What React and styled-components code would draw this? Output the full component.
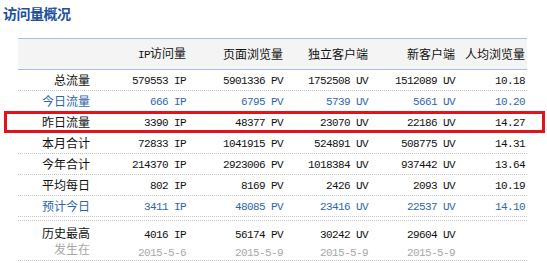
import React from 'react'
import styled, { createGlobalStyle, css } from 'styled-components'

const GlobalStyle = createGlobalStyle`
  body {
    margin: 0;
    background: #fff;
    font-family: "Noto Sans CJK SC", sans-serif;
  }
`

const Page = styled.div`
  width: 547px;
  height: 263px;
  box-sizing: border-box;
  padding: 6px 0 0 3px;
  overflow: hidden;
`

const Title = styled.h2`
  margin: 0 0 18px;
  font-size: 14px;
  line-height: 14px;
  font-weight: bold;
  letter-spacing: -0.5px;
  color: #1c4f9e;
`

const Table = styled.div`
  margin-left: 15px;
  width: 509px;
  font-size: 12px;
  color: #111;
`

// shared column grid, every cell right aligned
const columns = css`
  display: grid;
  grid-template-columns: 72px 96px 97px 85px 87px 70px;
  padding-right: 2px;
  box-sizing: border-box;
`

const Head = styled.div`
  ${columns}
  height: 32px;
  align-items: center;
  background: #f4f4f4;
  border-top: 1px solid #a9bee3;
  border-bottom: 1px solid #a9bee3;
`

const toneColor = {
  blue: '#2d68a8',
  gray: '#a8a8a8',
}

const Row = styled.div`
  ${columns}
  position: relative;
  height: 21px;
  align-items: center;
  border-bottom: 1px dotted #c6c6c6;
  color: ${p => toneColor[p.$tone] || '#111'};

  ${p => p.$marked && css`
    &::after {
      content: '';
      position: absolute;
      left: -14px;
      right: -18px;
      top: -1px;
      bottom: -1px;
      border: 3px solid #e4131b;
    }
  `}
`

const Spacer = styled.div`
  height: 3px;
  border-bottom: 1px dotted #c6c6c6;
`

const RecordRow = styled(Row)`
  height: 40px;
  align-items: start;
  padding-top: 4px;
  box-sizing: border-box;
`

const Cell = styled.div`
  text-align: right;
  white-space: nowrap;
  line-height: 14px;

  ${RecordRow} & {
    line-height: 16px;
  }
`

const Num = styled.span`
  font-family: "Liberation Mono", monospace;
  font-size: 11px;
  letter-spacing: -0.6px;
`

const Sub = styled.div`
  color: #a8a8a8;
`

const headers = ['', 'IP访问量', '页面浏览量', '独立客户端', '新客户端', '人均浏览量']

const rows = [
  { label: '总流量', v: ['579553', '5901336', '1752508', '1512089', '10.18'] },
  { label: '今日流量', tone: 'blue', v: ['666', '6795', '5739', '5661', '10.20'] },
  { label: '昨日流量', marked: true, v: ['3390', '48377', '23070', '22186', '14.27'] },
  { label: '本月合计', v: ['72833', '1041915', '524891', '508775', '14.31'] },
  { label: '今年合计', v: ['214370', '2923006', '1018384', '937442', '13.64'] },
  { label: '平均每日', v: ['802', '8169', '2426', '2093', '10.19'] },
  { label: '预计今日', tone: 'blue', v: ['3411', '48085', '23416', '22537', '14.10'] },
]

const units = ['IP', 'PV', 'UV', 'UV', '']

const record = {
  v: ['4016', '56174', '30242', '29604'],
  dates: ['2015-5-6', '2015-5-9', '2015-5-9', '2015-5-9'],
}

export default function App() {
  return (
    <>
      <GlobalStyle />
      <Page>
        <Title>访问量概况</Title>
        <Table>
          <Head>
            {headers.map((h, i) => (
              <Cell key={i}>
                {h.startsWith('IP') ? <><Num>IP</Num>{h.slice(2)}</> : h}
              </Cell>
            ))}
          </Head>

          {rows.map(r => (
            <Row key={r.label} $tone={r.tone} $marked={r.marked}>
              <Cell>{r.label}</Cell>
              {r.v.map((val, i) => (
                <Cell key={i}>
                  <Num>{units[i] ? `${val} ${units[i]}` : val}</Num>
                </Cell>
              ))}
            </Row>
          ))}

          <Spacer />

          <RecordRow>
            <Cell>
              历史最高
              <Sub>发生在</Sub>
            </Cell>
            {record.v.map((val, i) => (
              <Cell key={i}>
                <Num>{`${val} ${units[i]}`}</Num>
                <Sub><Num>{record.dates[i]}</Num></Sub>
              </Cell>
            ))}
            <Cell />
          </RecordRow>
        </Table>
      </Page>
    </>
  )
}
